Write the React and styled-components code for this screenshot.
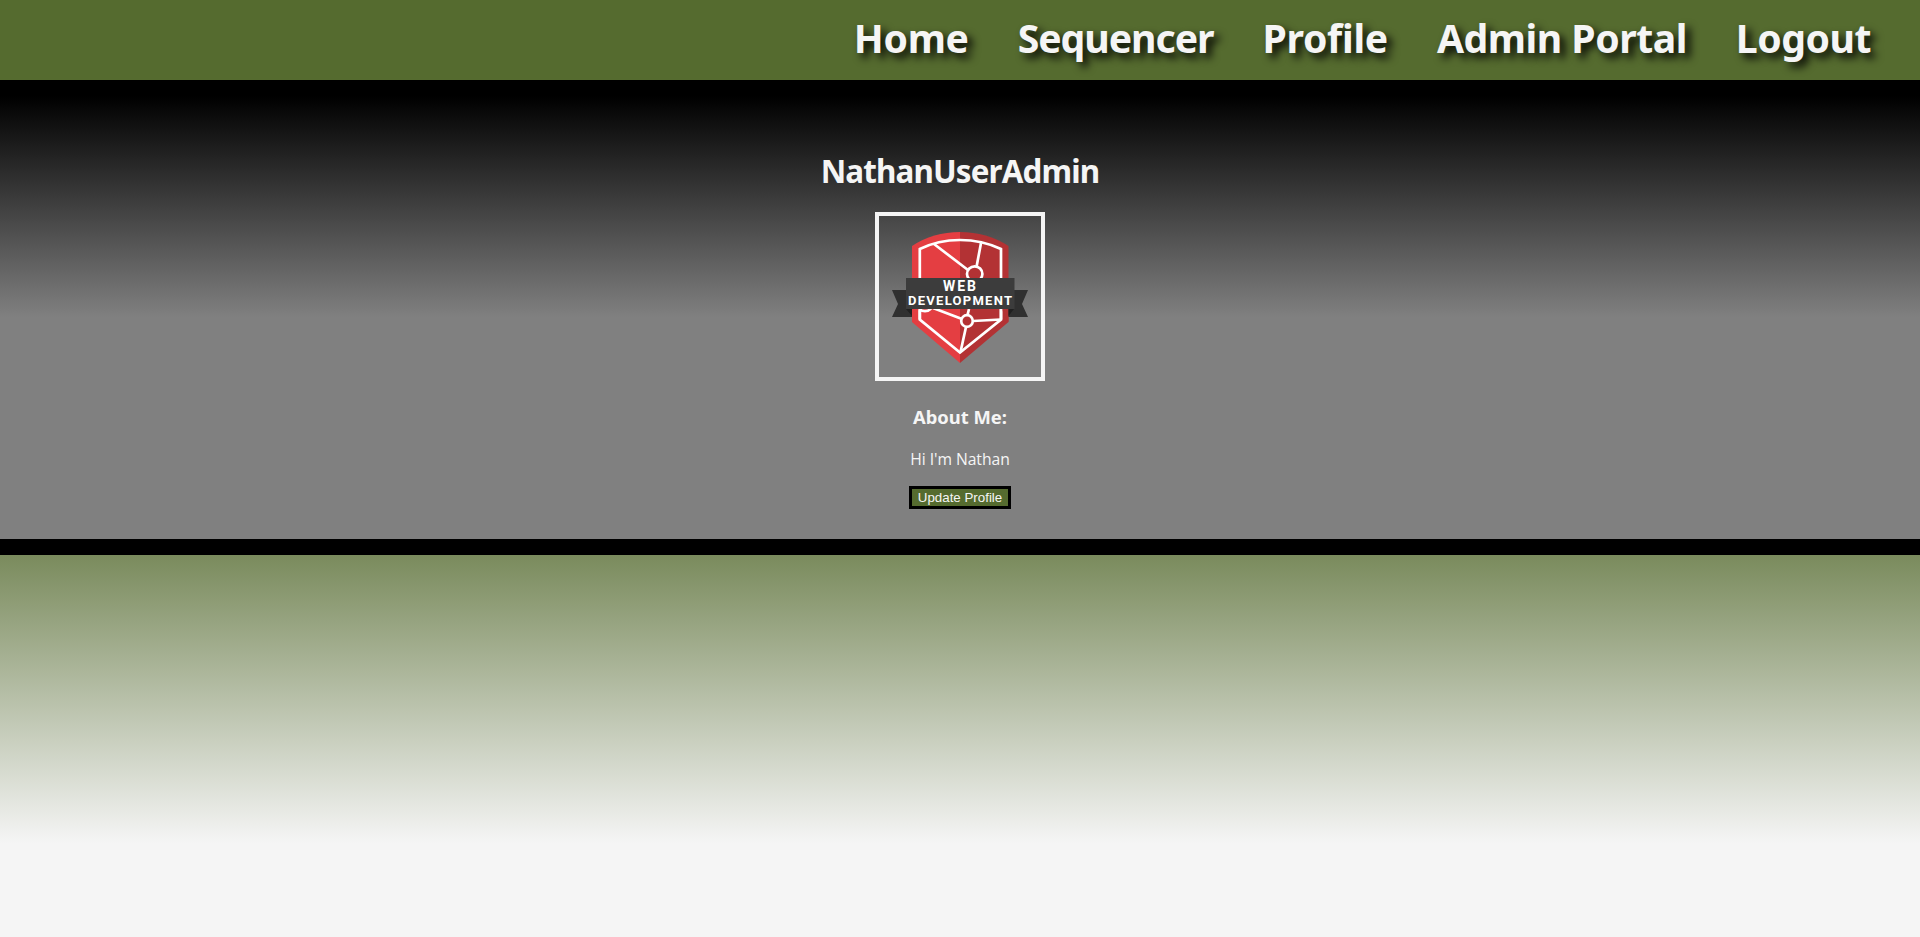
import React from 'react';
import styled, { createGlobalStyle } from 'styled-components';

const GlobalStyle = createGlobalStyle`
  html { height: 100%; }
  body {
    margin: 0;
    min-height: 937px;
    font-family: "Segoe UI", "Noto Sans", sans-serif;
    font-size: 16px;
    color: #f5f5f5;
    background: linear-gradient(#556b2f 50%, #f5f5f5 90%) no-repeat;
  }
`;

const NavBar = styled.nav`
  display: flex;
  justify-content: flex-end;
  align-items: center;
  gap: 49px;
  height: 80px;
  padding: 0 49px 4px 0;
  box-sizing: border-box;
  background: #556b2f;
`;

const NavLink = styled.a`
  display: block;
  font-size: 39.2px;
  line-height: 54px;
  font-weight: 700;
  white-space: nowrap;
  letter-spacing: ${(p) => p.$tracking || 0}px;
  text-shadow: 5px 5px 8px #000;
  color: #f5f5f5;
  cursor: pointer;
`;

const ProfilePanel = styled.main`
  display: flex;
  flex-direction: column;
  align-items: center;
  box-sizing: border-box;
  height: 475px;
  padding-top: 53px;
  border-top: 16px solid #000;
  border-bottom: 16px solid #000;
  background: linear-gradient(#000, #808080 50%) padding-box;
`;

const UserName = styled.h1`
  margin: 0 0 20px;
  font-size: 31.36px;
  line-height: 43px;
  letter-spacing: -0.85px;
`;

const Avatar = styled.div`
  width: 162px;
  height: 161px;
  border: 4px solid #f5f5f5;
`;

const AboutTitle = styled.h3`
  margin: 23px 0 0;
  font-size: 18.4px;
  line-height: 26px;
`;

const AboutText = styled.p`
  margin: 18px 0 16px;
  font-family: "Segoe UI", "Open Sans", sans-serif;
  font-size: 15.7px;
  line-height: 22px;
  letter-spacing: -0.05px;
`;

const UpdateButton = styled.button`
  padding: 1px 6px;
  border: 3px solid #000;
  border-radius: 0;
  background: #556b2f;
  color: #f5f5f5;
  font: 13.333px/15px "Liberation Sans", Arial, sans-serif;
`;

const LINKS = [
  { label: 'Home', tracking: -0.3 },
  { label: 'Sequencer', tracking: -1.05 },
  { label: 'Profile', tracking: -0.3 },
  { label: 'Admin Portal', tracking: -0.5 },
  { label: 'Logout', tracking: -0.5 },
];

function Badge() {
  return (
    <svg width="162" height="161" viewBox="14 11 162 161" role="img" aria-label="Web Development">
      <path d="M47 41 Q68 27 95 27 V158 L47 117Z" fill="#e43e42" />
      <path d="M143.500 41 Q122 27 95 27 V158 L143.500 117Z" fill="#b33234" />
      <g fill="none" stroke="#fff" strokeWidth="2.700">
        <path d="M54.800 44 Q73 35 95 35 Q117 35 136 44 V114.500 L95 147.500 L54.800 114.500Z" />
        <path d="M69 39 L103 65 M116 38 L111.500 62 M68 103 L97 114 M104 104 L102.500 110 M108 116 L136 114.500 M101 122 L95.500 147" />
        <circle cx="60" cy="98.500" r="7.700" />
        <circle cx="109.700" cy="69" r="7.700" />
        <circle cx="102" cy="116" r="5.800" fill="#b33234" />
      </g>
      <path d="M27 85 H49 V112 H27 L33 99Z M163 85 H141 V112 H163 L157 99Z" fill="#303030" />
      <path d="M47 104 V117 L54 104Z" fill="#e43e42" />
      <path d="M143.500 104 V117 L136.500 104Z" fill="#b33234" />
      <path d="M41 104 H47 V111Z M149 104 H143.500 V111Z" fill="#202020" />
      <path d="M54.800 104 V114.500 M136 104 V114.500" stroke="#fff" strokeWidth="2.700" />
      <path d="M41 73 H149.500 V104 H41Z" fill="#3c3c3c" />
      <g fill="#fff" fontFamily="Roboto, sans-serif" fontWeight="700" textAnchor="middle">
        <text x="94.500" y="86" fontSize="14" textLength="33">WEB</text>
        <text x="95" y="100" fontSize="13" textLength="104">DEVELOPMENT</text>
      </g>
    </svg>
  );
}

export default function App() {
  return (
    <>
      <GlobalStyle />
      <NavBar>
        {LINKS.map((l) => (
          <NavLink key={l.label} $tracking={l.tracking}>{l.label}</NavLink>
        ))}
      </NavBar>
      <ProfilePanel>
        <UserName>NathanUserAdmin</UserName>
        <Avatar><Badge /></Avatar>
        <AboutTitle>About Me:</AboutTitle>
        <AboutText>Hi I'm Nathan</AboutText>
        <UpdateButton>Update Profile</UpdateButton>
      </ProfilePanel>
    </>
  );
}
